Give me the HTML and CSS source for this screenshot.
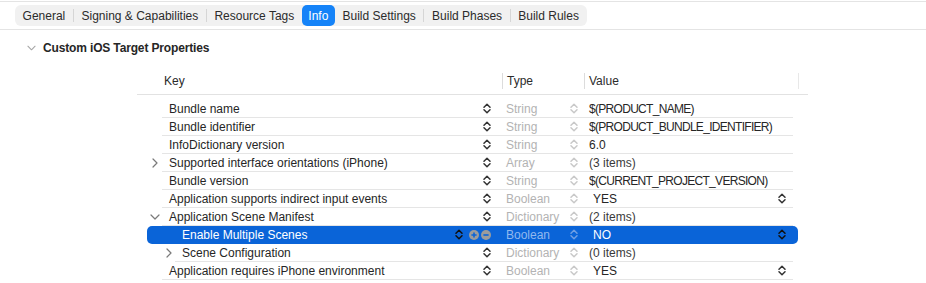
FILE: index.html
```html
<!DOCTYPE html>
<html>
<head>
<meta charset="utf-8">
<link rel="stylesheet" href="styles.css">
</head>
<body>
<svg width="0" height="0" class="defs">
  <defs>
    <symbol id="updown" viewBox="0 0 8 11">
      <path d="M1 4.2 L4 1.2 L7 4.2 M1 6.8 L4 9.8 L7 6.8" fill="none" stroke="currentColor" stroke-width="1.5" stroke-linecap="round" stroke-linejoin="round"/>
    </symbol>
    <symbol id="chev-right" viewBox="0 0 6 10">
      <path d="M1 1 L5 5 L1 9" fill="none" stroke="currentColor" stroke-width="1.2" stroke-linecap="round" stroke-linejoin="round"/>
    </symbol>
    <symbol id="chev-down" viewBox="0 0 10 6">
      <path d="M1 1 L5 5 L9 1" fill="none" stroke="currentColor" stroke-width="1.2" stroke-linecap="round" stroke-linejoin="round"/>
    </symbol>
    <symbol id="plus" viewBox="0 0 10 10">
      <circle cx="5" cy="5" r="5" fill="#9c9c9c"/>
      <path d="M2.4 5 H7.6 M5 2.4 V7.6" stroke="#0a64d8" stroke-width="1.6"/>
    </symbol>
    <symbol id="minus" viewBox="0 0 10 10">
      <circle cx="5" cy="5" r="5" fill="#9c9c9c"/>
      <path d="M2.4 5 H7.6" stroke="#0a64d8" stroke-width="1.6"/>
    </symbol>
  </defs>
</svg>

<div class="top">
  <div class="seg">
    <div class="tab">General</div>
    <div class="tab sep">Signing &amp; Capabilities</div>
    <div class="tab sep">Resource Tags</div>
    <div class="tab on">Info</div>
    <div class="tab">Build Settings</div>
    <div class="tab sep">Build Phases</div>
    <div class="tab sep">Build Rules</div>
  </div>
</div>

<div class="section">
  <svg class="sec-chev"><use href="#chev-down"/></svg>
  <span>Custom iOS Target Properties</span>
</div>

<div class="table">
  <div class="thead">
    <div class="th th-key">Key</div>
    <div class="th th-type">Type</div>
    <div class="th th-val">Value</div>
    <div class="th th-end"></div>
  </div>

  <div class="rows">
    <div class="row">
      <div class="tw"></div>
      <div class="inner">
        <div class="k"><span class="kt">Bundle name</span><svg class="ud"><use href="#updown"/></svg></div>
        <div class="t"><span>String</span><svg class="ud lt"><use href="#updown"/></svg></div>
        <div class="v"><span class="cap">$(PRODUCT_NAME)</span></div>
      </div>
    </div>
    <div class="row">
      <div class="tw"></div>
      <div class="inner">
        <div class="k"><span class="kt">Bundle identifier</span><svg class="ud"><use href="#updown"/></svg></div>
        <div class="t"><span>String</span><svg class="ud lt"><use href="#updown"/></svg></div>
        <div class="v"><span class="cap">$(PRODUCT_BUNDLE_IDENTIFIER)</span></div>
      </div>
    </div>
    <div class="row">
      <div class="tw"></div>
      <div class="inner">
        <div class="k"><span class="kt">InfoDictionary version</span><svg class="ud"><use href="#updown"/></svg></div>
        <div class="t"><span>String</span><svg class="ud lt"><use href="#updown"/></svg></div>
        <div class="v"><span>6.0</span></div>
      </div>
    </div>
    <div class="row">
      <div class="tw"><svg class="cr"><use href="#chev-right"/></svg></div>
      <div class="inner">
        <div class="k"><span class="kt">Supported interface orientations (iPhone)</span><svg class="ud"><use href="#updown"/></svg></div>
        <div class="t"><span>Array</span><svg class="ud lt"><use href="#updown"/></svg></div>
        <div class="v"><span class="dim">(3 items)</span></div>
      </div>
    </div>
    <div class="row">
      <div class="tw"></div>
      <div class="inner">
        <div class="k"><span class="kt">Bundle version</span><svg class="ud"><use href="#updown"/></svg></div>
        <div class="t"><span>String</span><svg class="ud lt"><use href="#updown"/></svg></div>
        <div class="v"><span class="cap">$(CURRENT_PROJECT_VERSION)</span></div>
      </div>
    </div>
    <div class="row">
      <div class="tw"></div>
      <div class="inner">
        <div class="k"><span class="kt">Application supports indirect input events</span><svg class="ud"><use href="#updown"/></svg></div>
        <div class="t"><span>Boolean</span><svg class="ud lt"><use href="#updown"/></svg></div>
        <div class="v bool"><span>YES</span><svg class="ud"><use href="#updown"/></svg></div>
      </div>
    </div>
    <div class="row">
      <div class="tw"><svg class="cd"><use href="#chev-down"/></svg></div>
      <div class="inner">
        <div class="k"><span class="kt">Application Scene Manifest</span><svg class="ud"><use href="#updown"/></svg></div>
        <div class="t"><span>Dictionary</span><svg class="ud lt"><use href="#updown"/></svg></div>
        <div class="v"><span class="dim">(2 items)</span></div>
      </div>
    </div>
    <div class="row sel l1">
      <div class="tw"></div>
      <div class="inner">
        <div class="k"><span class="kt">Enable Multiple Scenes</span>
          <svg class="ud"><use href="#updown"/></svg>
          <svg class="pm pm-plus"><use href="#plus"/></svg>
          <svg class="pm"><use href="#minus"/></svg>
        </div>
        <div class="t"><span>Boolean</span><svg class="ud lt"><use href="#updown"/></svg></div>
        <div class="v bool"><span>NO</span><svg class="ud"><use href="#updown"/></svg></div>
      </div>
    </div>
    <div class="row l1">
      <div class="tw"><svg class="cr"><use href="#chev-right"/></svg></div>
      <div class="inner">
        <div class="k"><span class="kt">Scene Configuration</span><svg class="ud"><use href="#updown"/></svg></div>
        <div class="t"><span>Dictionary</span><svg class="ud lt"><use href="#updown"/></svg></div>
        <div class="v"><span class="dim">(0 items)</span></div>
      </div>
    </div>
    <div class="row">
      <div class="tw"></div>
      <div class="inner">
        <div class="k"><span class="kt">Application requires iPhone environment</span><svg class="ud"><use href="#updown"/></svg></div>
        <div class="t"><span>Boolean</span><svg class="ud lt"><use href="#updown"/></svg></div>
        <div class="v bool"><span>YES</span><svg class="ud"><use href="#updown"/></svg></div>
      </div>
    </div>
  </div>
</div>
</body>
</html>
```

FILE: styles.css
```css
* { box-sizing: border-box; }

html, body {
  margin: 0;
  padding: 0;
  background: #ffffff;
}

body {
  font-family: "Liberation Sans", Arial, sans-serif;
  font-size: 12px;
  color: #262626;
  width: 926px;
  height: 283px;
  overflow: hidden;
}

.defs { position: absolute; }

/* ---------- top tab bar ---------- */
.top {
  margin-top: 1px;
  border-top: 1px solid #e4e4e4;
  border-bottom: 1px solid #e4e4e4;
  padding: 3px 0 2px 15px;
  height: 29px;
}

.seg {
  display: inline-flex;
  align-items: center;
  height: 21px;
  background: #f1f1f1;
  border-radius: 6px;
}

.tab {
  position: relative;
  height: 21px;
  line-height: 22px;
  padding: 0 7.6px;
  color: #2b2b2b;
  white-space: nowrap;
}

.tab.sep {
  border-left: 1px solid transparent;
}

.tab.sep::before {
  content: "";
  position: absolute;
  left: -1px;
  top: 4px;
  height: 13px;
  border-left: 1px solid #d6d6d6;
}

.tab.on {
  background: #1583f8;
  color: #ffffff;
  border-radius: 5px;
  padding: 0 6.5px;
}

/* ---------- section heading ---------- */
.section {
  display: flex;
  align-items: center;
  margin-top: 10px;
  height: 16px;
  padding-left: 27px;
  font-weight: bold;
  color: #262626;
  letter-spacing: -0.15px;
}

.sec-chev {
  width: 9px;
  height: 6px;
  color: #a6a6a6;
  margin-right: 7px;
}

/* ---------- table ---------- */
.table {
  margin-left: 137px;
  width: 671px;
}

.thead {
  display: flex;
  margin-top: 14px;
  height: 25px;
  border-bottom: 1px solid #e2e2e2;
  padding-top: 3px;
}

.th {
  height: 16px;
  line-height: 16px;
  color: #2b2b2b;
}

.th-key { width: 365px; padding-left: 27px; }
.th-type { width: 82px; padding-left: 4px; border-left: 1px solid #dcdcdc; }
.th-val { width: 214px; padding-left: 4px; border-left: 1px solid #dcdcdc; }
.th-end { width: 10px; border-left: 1px solid #e8e8e8; }

.rows {
  margin-top: 5px;
}

.row {
  display: flex;
  margin-left: 10px;
  width: 651px;
  height: 18px;
}

.tw {
  width: 15px;
  flex: none;
  display: flex;
  align-items: center;
  justify-content: center;
  color: #7a7a7a;
  padding-bottom: 1px;
}

.row.l1 .tw {
  margin-left: 13px;
  padding-left: 2px;
}

.cr { width: 6px; height: 10px; }
.cd { width: 10px; height: 6px; }

.inner {
  flex: 1;
  display: flex;
  height: 18px;
  margin-right: 5px;
  border-bottom: 1px solid #e5e5e5;
}

.k {
  flex: 1;
  display: flex;
  align-items: center;
  padding-left: 7px;
  padding-right: 11px;
  min-width: 0;
}

.kt {
  flex: 1;
  white-space: nowrap;
}

.t {
  width: 82px;
  flex: none;
  display: flex;
  align-items: center;
  justify-content: space-between;
  padding-left: 4px;
  padding-right: 6px;
  color: #b3b3b3;
}

.v {
  width: 209px;
  flex: none;
  display: flex;
  align-items: center;
  justify-content: space-between;
  padding-left: 5px;
  padding-right: 7px;
  white-space: nowrap;
}

.v.bool { padding-left: 9px; }

.cap { letter-spacing: -0.7px; }

.dim { color: #3a3a3a; }

.ud {
  width: 8px;
  height: 11px;
  flex: none;
  color: #333333;
}

.ud.lt { color: #c9c9c9; }

/* ---------- selected row ---------- */
.row.sel {
  background: #0a64d8;
  border-radius: 5px;
}

.row.sel .inner { border-bottom-color: transparent; }

.row.sel .kt,
.row.sel .v span { color: #ffffff; }

.row.sel .ud { color: #111111; }
.row.sel .ud.lt { color: #6f9fe3; }
.row.sel .t { color: #92b8ee; }

.pm {
  width: 10px;
  height: 10px;
  flex: none;
  margin-left: 2px;
}

.pm.pm-plus { margin-left: 6px; }
```
